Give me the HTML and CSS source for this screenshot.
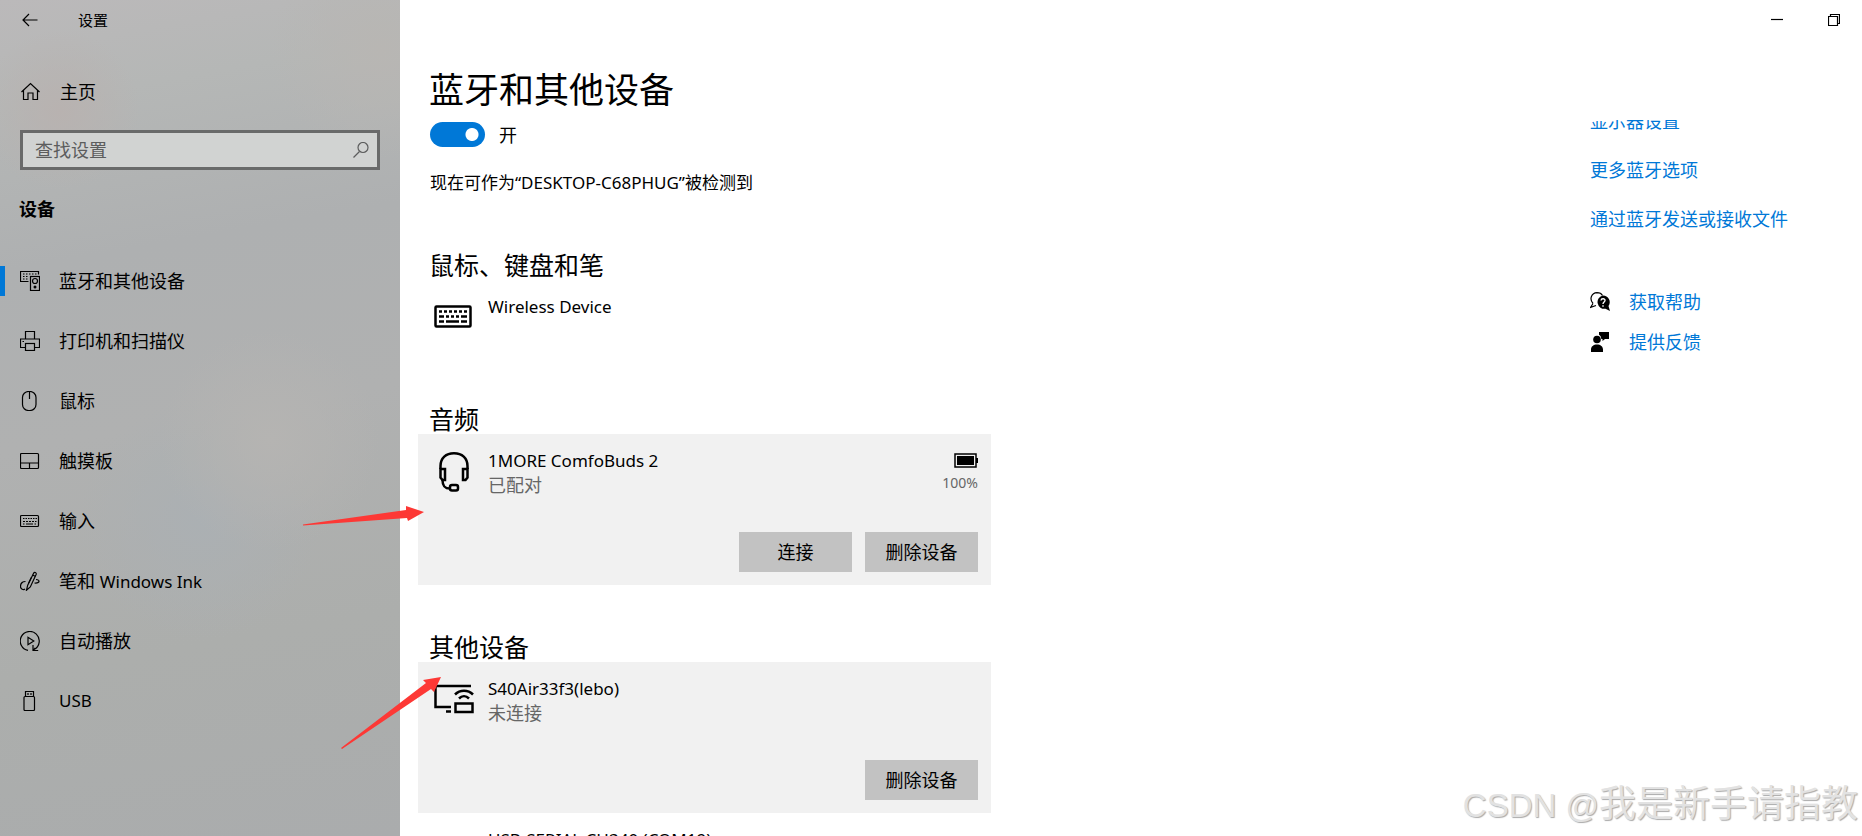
FILE: index.html
```
<!DOCTYPE html>
<html lang="zh-CN">
<head>
  <meta charset="UTF-8">
  <meta name="viewport" content="width=device-width,initial-scale=1.0">
  <title>设置</title>
  <link rel="stylesheet" href="styles.css">
</head>
<body>
  <div class="window">
    <aside class="sidebar">
      <div class="sidebar-top">
        <button class="back-btn" aria-label="返回">
          <svg width="16" height="14" viewBox="0 0 16 14"><path d="M7 1L1 7l6 6M1 7h14.500"/></svg>
        </button>
        <span class="app-title">设置</span>
      </div>
      <a class="home" href="#">
        <svg class="icon" viewBox="0 0 20 20"><path d="M1.500 10L10.500 1.500l9 8.500M3.500 8.500v9H8v-6.500h5v6.500h4.500v-9"/></svg>
        <span>主页</span>
      </a>
      <div class="search">
        <input type="text" placeholder="查找设置" aria-label="查找设置">
        <svg width="16" height="16" viewBox="0 0 16 16"><circle cx="10" cy="5.500" r="5"/><path d="M6.500 9.500L.500 15.500"/></svg>
      </div>
      <h2 class="group-title">设备</h2>
      <nav class="nav">
        <a class="nav-item active" href="#">
          <svg class="icon" viewBox="0 0 20 20"><path d="M18.500 3.500v-3h-18v10h8"/><path d="M3 3h14M3 5.500h6M3 8h5" stroke-dasharray="1.500 1.500"/><rect x="10.500" y="5.500" width="9" height="14"/><circle cx="15" cy="10" r="2.500"/><circle cx="15" cy="16" r="1.500" fill="currentColor" stroke="none"/></svg>
          <span>蓝牙和其他设备</span>
        </a>
        <a class="nav-item" href="#">
          <svg class="icon" viewBox="0 0 20 20"><path d="M5.500 8V.500h9V8M5.500 16.500h-5V8h19v8.500h-5M2.500 10.500h1.500"/><rect x="5.500" y="12.500" width="9" height="7"/></svg>
          <span>打印机和扫描仪</span>
        </a>
        <a class="nav-item" href="#">
          <svg class="icon" viewBox="0 0 20 20"><rect x="2.500" y=".500" width="13.500" height="19" rx="6"/><path d="M9.500 1v7"/></svg>
          <span>鼠标</span>
        </a>
        <a class="nav-item" href="#">
          <svg class="icon" viewBox="0 0 20 20"><rect x=".500" y="2.500" width="18" height="15" rx="1"/><path d="M.500 12h18M9.500 12v5"/></svg>
          <span>触摸板</span>
        </a>
        <a class="nav-item" href="#">
          <svg class="icon" viewBox="0 0 20 20"><rect x=".500" y="4.500" width="18" height="11" rx="1"/><path d="M3 7.500h14" stroke-dasharray="1.500 1"/><path d="M3 10.500h13.500" stroke-dasharray="2 1"/><path d="M3 13h1.500M6 13h7M14.500 13H16"/></svg>
          <span>输入</span>
        </a>
        <a class="nav-item" href="#">
          <svg class="icon" viewBox="0 0 20 20"><path d="M6.500 19.200l1.200-5L13.600 2.200c.700-1.500 3-.800 2.600 1L10.300 16z"/><path d="M12.500 4l2.700 1.300M11.300 6.500L8.700 12M5.500 10.500C2 10.500.500 13 .500 15.500c0 2.500 3 4 4.500 2.500M16 8.500c4 0 4.500 4-1.500 3.500"/></svg>
          <span>笔和 <span class="latin">Windows Ink</span></span>
        </a>
        <a class="nav-item" href="#">
          <svg class="icon" viewBox="0 0 20 20"><path d="M8 19.300A9.500 9.500 0 1 1 14.500 18.200M13 14v5.500h5.200M13.500 19l1.800-2"/><path d="M8 6.300v7.400l5.800-3.700z"/></svg>
          <span>自动播放</span>
        </a>
        <a class="nav-item" href="#">
          <svg class="icon" viewBox="0 0 20 20"><path d="M5.500 5.500v-5h8v5"/><rect x="4" y="5.500" width="10.500" height="14" rx="1"/><path d="M8 2v2M11 2v2"/></svg>
          <span class="latin">USB</span>
        </a>
      </nav>
    </aside>

    <main class="main">
      <div class="window-controls">
        <button aria-label="最小化"><svg width="12" height="12" viewBox="0 0 12 12"><path d="M0 5.500h12"/></svg></button>
        <button aria-label="还原"><svg width="12" height="12" viewBox="0 0 12 12"><path d="M.500 2.500h9v9h-9zM2.500 2.500v-2h9v9h-2"/></svg></button>
      </div>
      <h1 class="page-title">蓝牙和其他设备</h1>
      <div class="columns">
        <div class="content">
          <label class="toggle">
            <input type="checkbox" role="switch" checked>
            <span>开</span>
          </label>
          <p class="discoverable">现在可作为“DESKTOP-C68PHUG”被检测到</p>

          <section class="group">
            <h2>鼠标、键盘和笔</h2>
            <div class="device compact">
              <svg class="device-icon" viewBox="0 0 40 40"><rect x="1.500" y="8.500" width="35" height="20" rx="1"/><path d="M5 13.500h28" stroke-dasharray="3 2"/><path d="M5 18.500h5M12 18.500h3M17 18.500h3M22 18.500h3M27 18.500h6M5 23.500h5M12 23.500h13M27 23.500h6"/></svg>
              <div class="device-text"><span class="device-name">Wireless Device</span></div>
            </div>
          </section>

          <section class="group">
            <h2>音频</h2>
            <div class="device selected">
              <svg class="device-icon" viewBox="0 0 40 40"><path d="M6.500 17v-3C6.500 6 12 1.300 20 1.300S33.500 6 33.500 14v3M8.500 28c0 6 2 8.500 7.500 8.500"/><path d="M6.500 17h4.500v11H8.500L6.500 25.500zM33.500 17H29v11h2.500l2-2.500z"/><rect x="16" y="33" width="8" height="5.500" rx="2"/></svg>
              <div class="device-text">
                <span class="device-name">1MORE ComfoBuds 2</span>
                <span class="device-status">已配对</span>
              </div>
              <div class="battery">
                <svg width="24" height="16" viewBox="0 0 24 16"><rect x="1" y="1" width="21" height="13" fill="none" stroke="#000" stroke-width="1.500"/><rect x="3" y="3" width="17" height="9"/><rect x="22" y="5" width="2" height="5"/></svg>
                <span>100%</span>
              </div>
              <div class="actions">
                <button>连接</button>
                <button>删除设备</button>
              </div>
            </div>
          </section>

          <section class="group">
            <h2>其他设备</h2>
            <div class="device selected">
              <svg class="device-icon" viewBox="0 0 40 40"><path d="M37 6H1.500v21H17M12 31.500h5"/><rect x="21.500" y="23.500" width="17" height="8.500"/><path d="M21 14.500c5-5 13-5 18 0M25 18.500c3-3 7-3 10 0"/></svg>
              <div class="device-text">
                <span class="device-name">S40Air33f3(lebo)</span>
                <span class="device-status">未连接</span>
              </div>
              <div class="actions">
                <button>删除设备</button>
              </div>
            </div>
            <div class="device">
              <div class="device-icon"></div>
              <div class="device-text"><span class="device-name">USB-SERIAL CH340 (COM19)</span></div>
            </div>
          </section>
        </div>

        <aside class="related">
          <ul class="related-links">
            <li><a href="#">显示器设置</a></li>
            <li><a href="#">更多蓝牙选项</a></li>
            <li><a href="#">通过蓝牙发送或接收文件</a></li>
          </ul>
          <ul class="help-links">
            <li>
              <svg width="20" height="20" viewBox="0 0 20 20"><path d="M3 11.500C-1 7 1.500 1 7 .700c2.500 0 4.500 1 5.500 2.800M3 11.500L.700 15.300 6 13.500" fill="none" stroke="#000" stroke-width="1.200"/><path d="M13 3.500a6.700 6.700 0 0 1 5.500 10.500l1.500 5-4.500-2.300A6.700 6.700 0 1 1 13 3.500z"/><path d="M11 8.500c.200-2.500 4.200-2.300 4 0-.200 1.500-2 1.500-2 3.500M13 13.200v1.600" fill="none" stroke="#fff" stroke-width="1.400"/></svg>
              <a href="#">获取帮助</a>
            </li>
            <li>
              <svg width="20" height="20" viewBox="0 0 20 20"><circle cx="7" cy="7.500" r="3.800"/><path d="M1 20v-2.500c0-3 2.500-5 6-5s6 2 6 5V20zM9 0h10v7h-4l-2.500 2V7h-1.200C11 4.500 10.500 3.500 9 2.700z"/></svg>
              <a href="#">提供反馈</a>
            </li>
          </ul>
        </aside>
      </div>
    </main>

    <svg class="arrows" width="450" height="760" viewBox="0 0 450 760">
      <path d="M303 525.500v-1L406 510v-4l18 6-16 9-1-3z"/>
      <path d="M341 748l85-65-3-3 18-3-7 15-3-3-89 60z"/>
    </svg>
    <div class="watermark"><span>CSDN @</span>我是新手请指教</div>
  </div>
</body>
</html>
```
FILE: styles.css
```
* { box-sizing:border-box; }
body {
  margin:0; background:#fff; color:#000;
  font-family:"Noto Sans","Noto Sans CJK SC",sans-serif; font-size:18px; line-height:24px;
}
h1, h2, p, ul { margin:0; padding:0; font-weight:400; }
ul { list-style:none; }
a { color:inherit; text-decoration:none; }
button { border:none; background:none; padding:0; font:inherit; color:inherit; cursor:pointer; }
svg { display:block; flex:none; }

.window { position:relative; display:flex; height:100vh; overflow:hidden; }
.latin { font-size:17px; }

/* sidebar */
.sidebar {
  width:400px; flex:none;
  background:
    radial-gradient(circle at 270px 440px, #b5b4b2 0, #b5b4b200 110px),
    radial-gradient(circle at 200px 520px, #abb0b3 0, #abb0b300 120px),
    radial-gradient(circle at 60px 110px, #b8b2b0 0, #b8b2b000 80px),
    radial-gradient(circle at 380px 50px, #b8b6b3 0, #b8b6b300 110px),
    linear-gradient(170deg, #bbb9ba 0, #b5b7b6 12%, #aeb0b1 30%, #b0b1b1 50%, #acaeac 75%, #aaacad 100%);
}
.sidebar-top { display:flex; align-items:center; gap:40px; height:40px; padding-left:22px; font-size:15px; }
.back-btn svg, .icon, .search svg, .window-controls svg { fill:none; stroke:currentColor; stroke-width:1.2; }
.icon { width:20px; height:20px; }
.home { display:flex; align-items:center; gap:20px; height:60px; margin-top:22px; padding-left:20px; }
.search { position:relative; margin:8px 20px 0; }
.search input {
  display:block; width:100%; height:40px; padding:0 40px 0 12px;
  border:3px solid #696a6a; border-radius:0; outline:none; background:#d1d3d2; font:inherit; color:#000;
}
.search input::placeholder { color:#5c5d5d; opacity:1; }
.search svg { position:absolute; right:11px; top:12px; color:#5c5d5d; }
.group-title { margin:27px 0 30px; padding-left:19px; font-size:18px; font-weight:700; }
.nav-item { display:flex; align-items:center; gap:19px; height:60px; padding-left:20px; }
.nav-item.active { background:linear-gradient(#0078d7,#0078d7) 0 50% / 5px 30px no-repeat; }

/* main area */
.main { flex:1; min-width:0; display:flex; flex-direction:column; padding-left:18px; }
.window-controls { display:flex; justify-content:flex-end; height:40px; }
.window-controls button { width:57px; display:flex; align-items:center; justify-content:center; }
.page-title { margin:26px 0 6px; padding-left:11px; font-size:35px; line-height:48px; }
.columns { flex:1; min-height:0; display:flex; justify-content:space-between; overflow:hidden; }
.content { width:573px; }
.toggle { display:flex; align-items:center; gap:14px; padding:2px 0 0 12px; width:max-content; }
.toggle input {
  appearance:none; width:55px; height:25px; margin:0; border-radius:13px;
  background:radial-gradient(circle at 42px 50%, #fff 6px, #0078d7 7px);
}
.discoverable { margin-top:24px; padding-left:12px; font-size:17px; }

.group { margin-top:45px; }
.discoverable + .group { margin-top:52px; }
.group h2 { padding-left:11px; font-size:25px; line-height:36px; margin-bottom:-3px; }
.device {
  display:grid; grid-template-columns:40px 1fr auto; column-gap:14px; align-content:start;
  min-height:151px; padding:15px 13px 13px 16px;
}
.group + .group { margin-top:44px; }
.device.selected { background:#f1f1f1; align-content:space-between; }
.device.compact { min-height:77px; }
.device-icon { width:40px; height:40px; margin-top:3px; fill:none; stroke:#000; stroke-width:2.5; }
.device-text { display:flex; flex-direction:column; }
.device-name { font-size:17px; }
.device-status { color:#666; }
.battery { display:flex; flex-direction:column; align-items:flex-end; gap:4px; margin-top:4px; font-size:14px; line-height:20px; color:#666; }
.battery svg { fill:#000; }
.actions { grid-column:1 / -1; display:flex; justify-content:flex-end; gap:13px; }
.actions button { width:113px; height:40px; background:#c2c2c2; }

/* right column, scrolled under the title */
.related { width:272px; flex:none; margin-top:-11px; color:#0078d7; }
.related-links { display:flex; flex-direction:column; gap:25px; }
.help-links { display:flex; flex-direction:column; gap:16px; margin-top:59px; }
.help-links li { display:flex; align-items:center; gap:19px; }
.help-links svg { fill:#000; }

.arrows { position:absolute; left:0; top:0; fill:#fd3835; pointer-events:none; }
.watermark {
  position:absolute; right:4px; bottom:6px; font-size:37px; line-height:48px;
  color:#e2e2e2; text-shadow:1px 1px 1px #aaa; pointer-events:none; white-space:nowrap;
}
.watermark span { font-family:"Liberation Sans",sans-serif; font-size:33px; }
```
